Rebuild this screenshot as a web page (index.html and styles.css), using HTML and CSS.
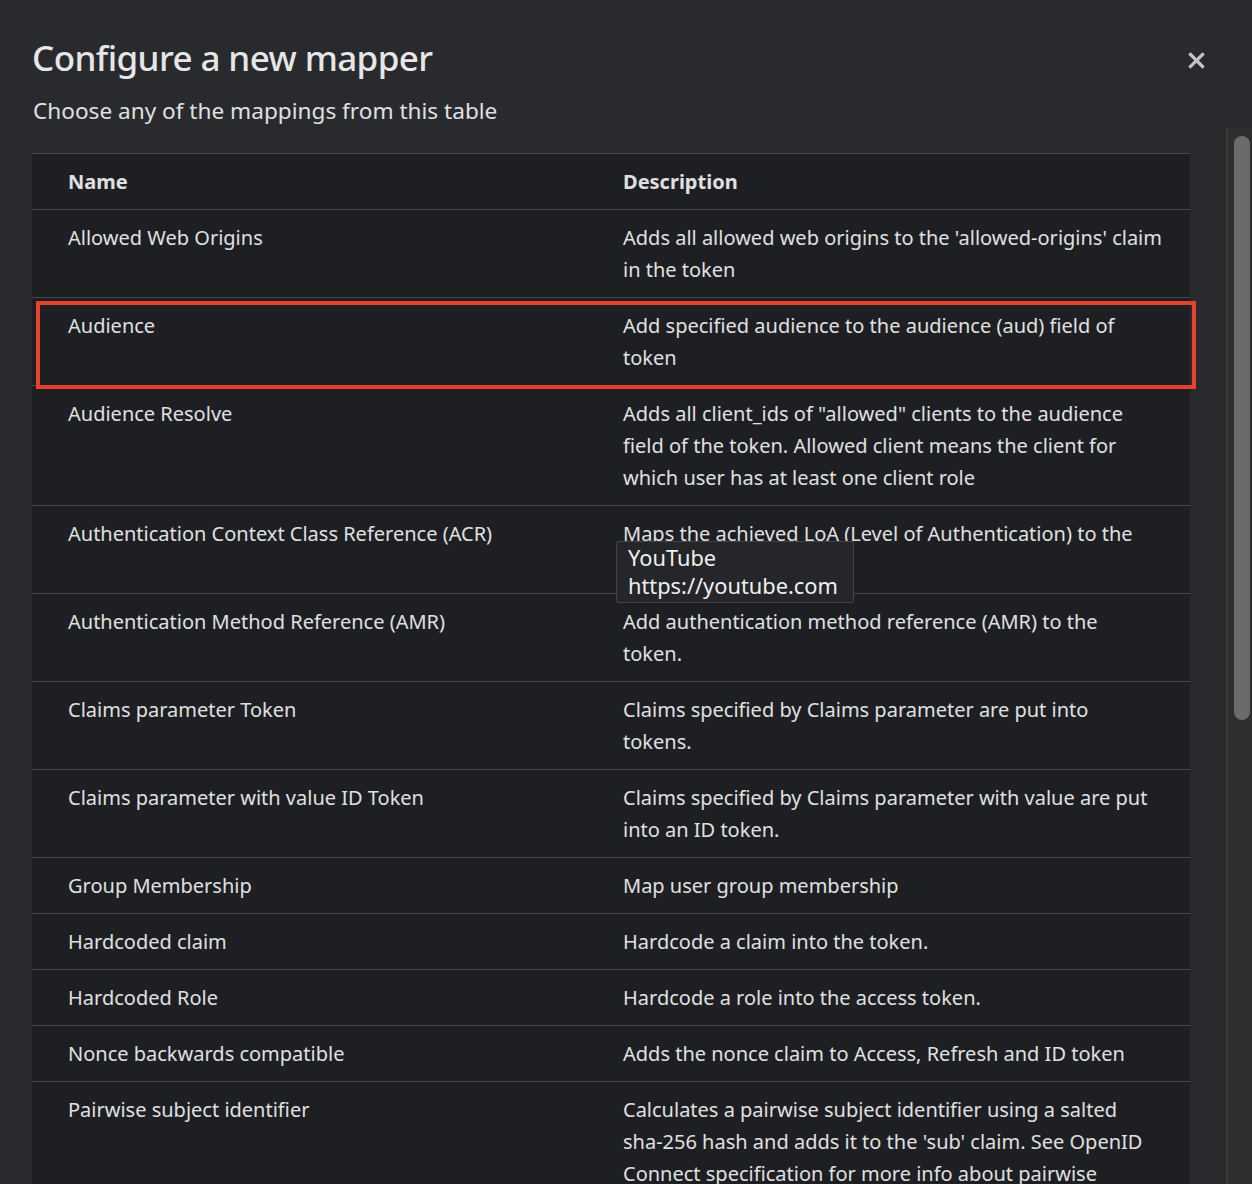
FILE: index.html
```html
<!DOCTYPE html>
<html>
<head>
<meta charset="utf-8">
<link rel="stylesheet" href="styles.css">
</head>
<body>
<div class="modal">
  <header class="modal-head">
    <h1 class="title">Configure a new mapper</h1>
    <p class="subtitle">Choose any of the mappings from this table</p>
    <button class="close" aria-label="Close">
      <svg width="17" height="17" viewBox="0 0 17 17"><path d="M2.5 2.5 L14.5 14.5 M14.5 2.5 L2.5 14.5" stroke="#c4c4c6" stroke-width="3.2" stroke-linecap="square"/></svg>
    </button>
  </header>
  <div class="table">
    <div class="row head"><div class="c1">Name</div><div class="c2">Description</div></div>
    <div class="row"><div class="c1">Allowed Web Origins</div><div class="c2">Adds all allowed web origins to the 'allowed-origins' claim<br>in the token</div></div>
    <div class="row selected"><div class="c1">Audience</div><div class="c2">Add specified audience to the audience (aud) field of<br>token</div></div>
    <div class="row"><div class="c1">Audience Resolve</div><div class="c2">Adds all client_ids of "allowed" clients to the audience<br>field of the token. Allowed client means the client for<br>which user has at least one client role</div></div>
    <div class="row tip-row"><div class="c1">Authentication Context Class Reference (ACR)</div><div class="c2">Maps the achieved LoA (Level of Authentication) to the<br>'acr' claim</div>
      <div class="tooltip">YouTube<br>https://youtube.com</div>
    </div>
    <div class="row"><div class="c1">Authentication Method Reference (AMR)</div><div class="c2">Add authentication method reference (AMR) to the<br>token.</div></div>
    <div class="row"><div class="c1">Claims parameter Token</div><div class="c2">Claims specified by Claims parameter are put into<br>tokens.</div></div>
    <div class="row"><div class="c1">Claims parameter with value ID Token</div><div class="c2">Claims specified by Claims parameter with value are put<br>into an ID token.</div></div>
    <div class="row"><div class="c1">Group Membership</div><div class="c2">Map user group membership</div></div>
    <div class="row"><div class="c1">Hardcoded claim</div><div class="c2">Hardcode a claim into the token.</div></div>
    <div class="row"><div class="c1">Hardcoded Role</div><div class="c2">Hardcode a role into the access token.</div></div>
    <div class="row"><div class="c1">Nonce backwards compatible</div><div class="c2">Adds the nonce claim to Access, Refresh and ID token</div></div>
    <div class="row"><div class="c1">Pairwise subject identifier</div><div class="c2">Calculates a pairwise subject identifier using a salted<br>sha-256 hash and adds it to the 'sub' claim. See OpenID<br>Connect specification for more info about pairwise<br>subject identifiers.</div></div>
  </div>
</div>
<div class="scrollbar"><div class="thumb"></div></div>
</body>
</html>
```
FILE: styles.css
```css
html, body {
  margin: 0;
  height: 100%;
  overflow: hidden;
}
body {
  background: #292a2e;
  color: #e0e0e0;
  font-family: "Noto Sans", "Liberation Sans", sans-serif;
  position: relative;
}
.modal {
  padding: 0 62px 0 32px;
}
.modal-head {
  position: relative;
  padding-top: 36px;
}
.title {
  margin: 0;
  font-family: "Noto Sans", sans-serif;
  font-weight: 500;
  font-size: 35px;
  line-height: 44px;
  letter-spacing: -0.6px;
  color: #e6e6e6;
}
.subtitle {
  margin: 15px 0 0 1px;
  font-size: 22.6px;
  line-height: 32px;
  color: #e0e0e0;
}
.close {
  position: absolute;
  right: -15px;
  top: 52px;
  background: none;
  border: 0;
  padding: 0;
  width: 17px;
  height: 17px;
}
.table {
  margin-top: 26px;
  background: #1e1f23;
  border-top: 1px solid #47484b;
}
.row {
  display: grid;
  grid-template-columns: 591px 1fr;
  border-bottom: 1px solid #47484b;
  font-size: 20px;
  line-height: 32px;
  position: relative;
}
.row > div {
  padding: 12px 0 11px;
}
.row .c1 { padding-left: 36px; padding-right: 20px; }
.row .c2 { padding-right: 16px; }
.row.head { font-weight: 700; font-size: 20px; }
.row.selected::after {
  content: "";
  position: absolute;
  left: 4px;
  right: -6px;
  top: 3px;
  bottom: -4px;
  border: 4px solid #e8412b;
  pointer-events: none;
}
.tooltip {
  position: absolute;
  left: 584px;
  top: 35px;
  width: 238px;
  box-sizing: border-box;
  padding: 2px 0 2px 11px !important;
  background: #25262a;
  border: 1px solid #424347;
  border-radius: 2px;
  font-size: 21.8px;
  line-height: 28px;
  color: #f0f0f0;
}
.scrollbar {
  position: absolute;
  left: 1226px;
  top: 128px;
  right: 0;
  bottom: 0;
  background: #2e2e2e;
  border-left: 2px solid #3b3c3c;
}
.thumb {
  position: absolute;
  left: 6px;
  top: 8px;
  width: 16px;
  height: 584px;
  border-radius: 8px;
  background: #6b6b6b;
}
```
